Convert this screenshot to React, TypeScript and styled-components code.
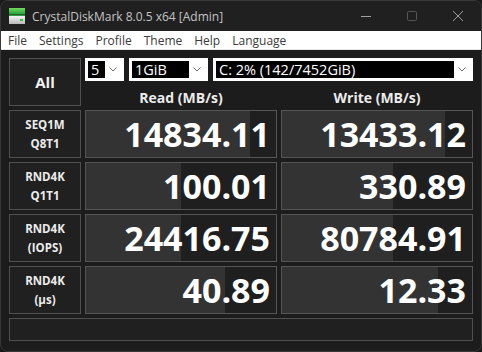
import React from "react";
import styled, { createGlobalStyle } from "styled-components";

const GlobalStyle = createGlobalStyle`
  html, body {
    margin: 0;
    padding: 0;
    background: #1a1a1a;
  }
  * {
    box-sizing: border-box;
  }
`;

const Window = styled.div`
  width: 482px;
  height: 352px;
  background: #1c1c1c;
  border: 1px solid #383838;
  border-radius: 8px;
  overflow: hidden;
  display: flex;
  flex-direction: column;
  font-family: "Open Sans", "Noto Sans", sans-serif;
`;

const TitleBar = styled.div`
  height: 30px;
  display: flex;
  align-items: center;
  background: #202020;
  padding-left: 8px;
`;

const Title = styled.span`
  margin-left: 7px;
  font-size: 12px;
  color: #c4c4c4;
`;

const Controls = styled.div`
  margin-left: auto;
  display: flex;
  height: 100%;
`;

const ControlButton = styled.div`
  width: 46px;
  height: 100%;
  display: flex;
  align-items: center;
  justify-content: center;
`;

const MenuBar = styled.div`
  height: 19px;
  display: flex;
  align-items: center;
  background: #ffffff;
  border-bottom: 1px solid #e4e4e4;
  padding-left: 1px;
`;

const MenuItem = styled.span`
  font-size: 12px;
  color: #3a3a3a;
  padding: 0 6px;
`;

const Board = styled.div`
  flex: 1;
  padding: 8px 8px 0;
  display: grid;
  grid-template-columns: 72px 192px 192px;
  grid-template-rows: 23px 21px repeat(4, 48px) 23px;
  column-gap: 4px;
  row-gap: 4px;
`;

const AllButton = styled.div`
  grid-row: 1 / 3;
  border: 1px solid #505050;
  background: #202020;
  color: #f2f2f2;
  font-size: 15px;
  font-weight: 700;
  display: flex;
  align-items: center;
  justify-content: center;
`;

const ComboRow = styled.div`
  grid-column: 2 / 4;
  display: flex;
  gap: 5px;
`;

const Combo = styled.div<{ $w: number }>`
  width: ${(p) => p.$w}px;
  height: 23px;
  background: #ffffff;
  padding: 3px;
  display: flex;
  align-items: stretch;
`;

const ComboText = styled.div`
  flex: 1;
  background: #000000;
  color: #ffffff;
  font-size: 14.5px;
  line-height: 17px;
  padding-left: 3px;
  white-space: nowrap;
`;

const Chevron = styled.div`
  width: 16px;
  display: flex;
  align-items: center;
  justify-content: center;
`;

const Header = styled.div`
  color: #ececec;
  font-size: 14px;
  font-weight: 700;
  text-align: center;
  line-height: 21px;
  padding-top: 2px;
`;

const Label = styled.div`
  border: 1px solid #505050;
  background: #202020;
  color: #ececec;
  font-size: 11.5px;
  font-weight: 700;
  line-height: 19px;
  display: flex;
  flex-direction: column;
  align-items: center;
  justify-content: center;
`;

const Value = styled.div<{ $fill: number }>`
  border: 1px solid #555555;
  background: linear-gradient(
    to right,
    #333333 ${(p) => p.$fill}px,
    #1f1f1f ${(p) => p.$fill}px
  );
  color: #ffffff;
  font-size: 34px;
  font-weight: 700;
  line-height: 1;
  display: flex;
  align-items: center;
  justify-content: flex-end;
  padding-right: 6px;
`;

const StatusBar = styled.div`
  grid-column: 1 / 4;
  border: 1px solid #505050;
  background: #202020;
`;

const AppIcon = () => (
  <svg width="16" height="16" viewBox="0 0 16 16">
    <defs>
      <linearGradient id="g" x1="0" y1="0" x2="0" y2="1">
        <stop offset="0" stopColor="#6fdc5c" />
        <stop offset="1" stopColor="#27a33a" />
      </linearGradient>
      <linearGradient id="d" x1="0" y1="0" x2="0" y2="1">
        <stop offset="0" stopColor="#f4f4f4" />
        <stop offset="1" stopColor="#b8b8b8" />
      </linearGradient>
    </defs>
    <rect x="0" y="0" width="16" height="6" fill="url(#g)" />
    <rect x="0" y="6.5" width="16" height="1.5" fill="#2f9e3c" />
    <rect x="0" y="8" width="16" height="8" fill="url(#d)" />
    <rect x="11" y="11" width="3" height="2" fill="#2ec44a" />
  </svg>
);

const ChevronIcon = () => (
  <svg width="8" height="5" viewBox="0 0 8 5">
    <path d="M0.5 0.5 L4 4 L7.5 0.5" fill="none" stroke="#707070" strokeWidth="1" />
  </svg>
);

const rows = [
  { l1: "SEQ1M", l2: "Q8T1", read: "14834.11", write: "13433.12", rf: 164, wf: 163 },
  { l1: "RND4K", l2: "Q1T1", read: "100.01", write: "330.89", rf: 95, wf: 111 },
  { l1: "RND4K", l2: "(IOPS)", read: "24416.75", write: "80784.91", rf: 95, wf: 111 },
  { l1: "RND4K", l2: "(μs)", read: "40.89", write: "12.33", rf: 139, wf: 156 },
];

const menus = ["File", "Settings", "Profile", "Theme", "Help", "Language"];

export default function App() {
  return (
    <>
      <GlobalStyle />
      <Window>
        <TitleBar>
          <AppIcon />
          <Title>CrystalDiskMark 8.0.5 x64 [Admin]</Title>
          <Controls>
            <ControlButton>
              <svg width="10" height="10" viewBox="0 0 10 10">
                <path d="M0 5.5 H10" stroke="#a0a0a0" strokeWidth="1" />
              </svg>
            </ControlButton>
            <ControlButton>
              <svg width="10" height="10" viewBox="0 0 10 10">
                <rect x="0.5" y="0.5" width="9" height="9" rx="1" fill="none" stroke="#555" strokeWidth="1" />
              </svg>
            </ControlButton>
            <ControlButton>
              <svg width="10" height="10" viewBox="0 0 10 10">
                <path d="M0 0 L10 10 M10 0 L0 10" stroke="#a0a0a0" strokeWidth="1" />
              </svg>
            </ControlButton>
          </Controls>
        </TitleBar>
        <MenuBar>
          {menus.map((m) => (
            <MenuItem key={m}>{m}</MenuItem>
          ))}
        </MenuBar>
        <Board>
          <AllButton>All</AllButton>
          <ComboRow>
            <Combo $w={39}>
              <ComboText>5</ComboText>
              <Chevron>
                <ChevronIcon />
              </Chevron>
            </Combo>
            <Combo $w={79}>
              <ComboText>1GiB</ComboText>
              <Chevron>
                <ChevronIcon />
              </Chevron>
            </Combo>
            <Combo $w={260}>
              <ComboText>C: 2% (142/7452GiB)</ComboText>
              <Chevron>
                <ChevronIcon />
              </Chevron>
            </Combo>
          </ComboRow>
          <Header>Read (MB/s)</Header>
          <Header>Write (MB/s)</Header>
          {rows.map((r, i) => (
            <React.Fragment key={i}>
              <Label>
                <span>{r.l1}</span>
                <span>{r.l2}</span>
              </Label>
              <Value $fill={r.rf}>{r.read}</Value>
              <Value $fill={r.wf}>{r.write}</Value>
            </React.Fragment>
          ))}
          <StatusBar />
        </Board>
      </Window>
    </>
  );
}
